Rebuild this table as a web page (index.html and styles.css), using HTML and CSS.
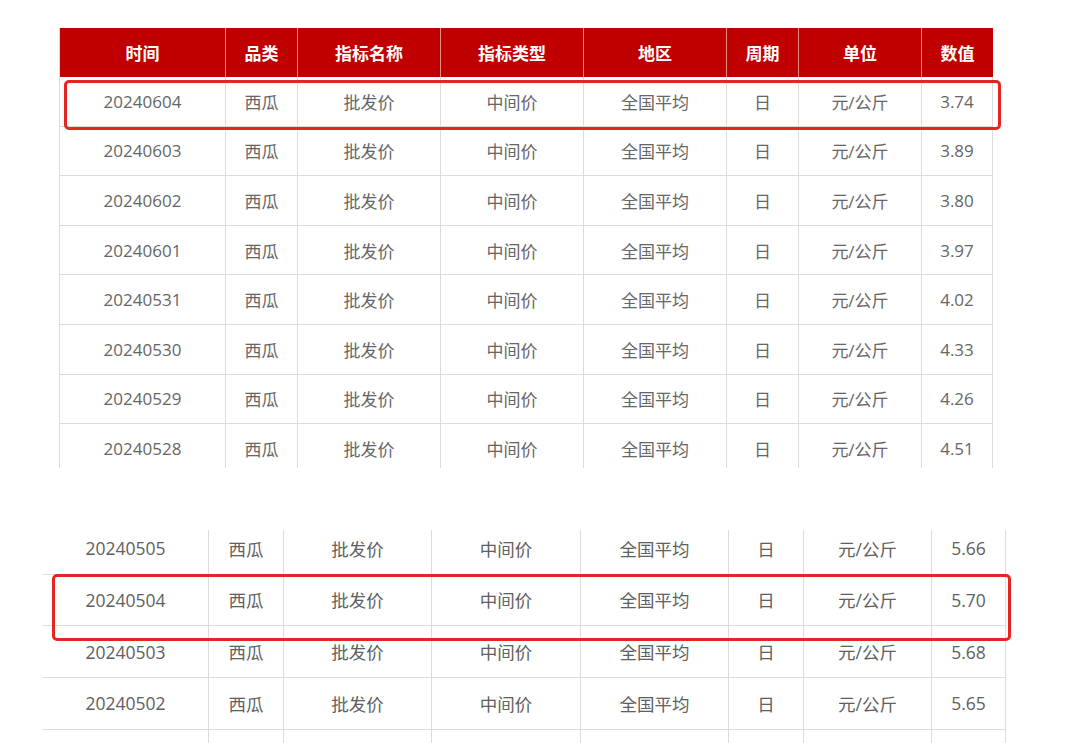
FILE: index.html
```html
<!DOCTYPE html>
<html lang="zh-CN">
<head>
<meta charset="utf-8">
<title>西瓜批发价</title>
<link rel="stylesheet" href="styles.css">
</head>
<body>
<main class="page">
  <section class="block block-top">
    <div class="clip clip-top">
      <div class="row row-top head">
        <div class="cell">时间</div><div class="cell">品类</div><div class="cell">指标名称</div><div class="cell">指标类型</div><div class="cell">地区</div><div class="cell">周期</div><div class="cell">单位</div><div class="cell">数值</div>
      </div>
      <div class="row row-top body-row">
        <div class="cell">20240604</div><div class="cell">西瓜</div><div class="cell">批发价</div><div class="cell">中间价</div><div class="cell">全国平均</div><div class="cell">日</div><div class="cell">元/公斤</div><div class="cell">3.74</div>
      </div>
      <div class="row row-top body-row">
        <div class="cell">20240603</div><div class="cell">西瓜</div><div class="cell">批发价</div><div class="cell">中间价</div><div class="cell">全国平均</div><div class="cell">日</div><div class="cell">元/公斤</div><div class="cell">3.89</div>
      </div>
      <div class="row row-top body-row">
        <div class="cell">20240602</div><div class="cell">西瓜</div><div class="cell">批发价</div><div class="cell">中间价</div><div class="cell">全国平均</div><div class="cell">日</div><div class="cell">元/公斤</div><div class="cell">3.80</div>
      </div>
      <div class="row row-top body-row">
        <div class="cell">20240601</div><div class="cell">西瓜</div><div class="cell">批发价</div><div class="cell">中间价</div><div class="cell">全国平均</div><div class="cell">日</div><div class="cell">元/公斤</div><div class="cell">3.97</div>
      </div>
      <div class="row row-top body-row">
        <div class="cell">20240531</div><div class="cell">西瓜</div><div class="cell">批发价</div><div class="cell">中间价</div><div class="cell">全国平均</div><div class="cell">日</div><div class="cell">元/公斤</div><div class="cell">4.02</div>
      </div>
      <div class="row row-top body-row">
        <div class="cell">20240530</div><div class="cell">西瓜</div><div class="cell">批发价</div><div class="cell">中间价</div><div class="cell">全国平均</div><div class="cell">日</div><div class="cell">元/公斤</div><div class="cell">4.33</div>
      </div>
      <div class="row row-top body-row">
        <div class="cell">20240529</div><div class="cell">西瓜</div><div class="cell">批发价</div><div class="cell">中间价</div><div class="cell">全国平均</div><div class="cell">日</div><div class="cell">元/公斤</div><div class="cell">4.26</div>
      </div>
      <div class="row row-top body-row">
        <div class="cell">20240528</div><div class="cell">西瓜</div><div class="cell">批发价</div><div class="cell">中间价</div><div class="cell">全国平均</div><div class="cell">日</div><div class="cell">元/公斤</div><div class="cell">4.51</div>
      </div>
    </div>
    <div class="mark mark-top"></div>
  </section>

  <section class="block block-bottom">
    <div class="clip clip-bottom">
      <div class="rows-bottom">
        <div class="row row-bottom">
          <div class="cell">20240505</div><div class="cell">西瓜</div><div class="cell">批发价</div><div class="cell">中间价</div><div class="cell">全国平均</div><div class="cell">日</div><div class="cell">元/公斤</div><div class="cell">5.66</div>
        </div>
        <div class="row row-bottom">
          <div class="cell">20240504</div><div class="cell">西瓜</div><div class="cell">批发价</div><div class="cell">中间价</div><div class="cell">全国平均</div><div class="cell">日</div><div class="cell">元/公斤</div><div class="cell">5.70</div>
        </div>
        <div class="row row-bottom">
          <div class="cell">20240503</div><div class="cell">西瓜</div><div class="cell">批发价</div><div class="cell">中间价</div><div class="cell">全国平均</div><div class="cell">日</div><div class="cell">元/公斤</div><div class="cell">5.68</div>
        </div>
        <div class="row row-bottom">
          <div class="cell">20240502</div><div class="cell">西瓜</div><div class="cell">批发价</div><div class="cell">中间价</div><div class="cell">全国平均</div><div class="cell">日</div><div class="cell">元/公斤</div><div class="cell">5.65</div>
        </div>
        <div class="row row-bottom">
          <div class="cell"></div><div class="cell"></div><div class="cell"></div><div class="cell"></div><div class="cell"></div><div class="cell"></div><div class="cell"></div><div class="cell"></div>
        </div>
      </div>
    </div>
    <div class="mark mark-bottom"></div>
  </section>
</main>
</body>
</html>
```

FILE: styles.css
```css
html, body {
  margin: 0;
  padding: 0;
  background: #ffffff;
}

body {
  font-family: "Open Sans", "Noto Sans CJK SC", sans-serif;
  color: #666666;
  width: 1080px;
  height: 743px;
  overflow: hidden;
}

.page {
  display: flex;
  flex-direction: column;
}

.block {
  position: relative;
}

.block-top {
  margin: 28px 0 0 59px;
  width: 934px;
}

.clip {
  overflow: hidden;
}

.clip-top {
  height: 440px;
  border-left: 1px solid #dcdcdc;
  box-sizing: border-box;
}

.row {
  display: grid;
  box-sizing: border-box;
}

.row-top {
  grid-template-columns: 166px 72px 143px 143px 143px 72px 123px 71px;
}

.cell {
  display: flex;
  align-items: center;
  justify-content: center;
  box-sizing: border-box;
  border-right: 1px solid #dcdcdc;
  border-bottom: 1px solid #dcdcdc;
  white-space: nowrap;
}

.head {
  height: 49px;
  background: #c00000;
}

.head .cell {
  color: #ffffff;
  font-weight: 700;
  font-size: 17px;
  border-right: 1px solid rgba(255, 255, 255, 0.55);
  border-bottom: none;
}

.head .cell:last-child {
  border-right: none;
}

.body-row {
  height: 49.6px;
}

.body-row .cell {
  font-size: 17px;
}

.block-bottom {
  margin: 62px 0 0 43px;
  width: 963px;
}

.clip-bottom {
  height: 213px;
}

.rows-bottom {
  margin-top: -7px;
}

.row-bottom {
  grid-template-columns: 166px 75px 148px 149px 148px 75px 128px 74px;
  height: 51.67px;
}

.row-bottom .cell {
  font-size: 17.5px;
  color: #606060;
}

.mark {
  position: absolute;
  box-sizing: border-box;
  border: 3px solid #e52620;
  border-radius: 5px;
  pointer-events: none;
}

.mark-top {
  left: 5px;
  top: 52px;
  width: 937px;
  height: 50px;
}

.mark-bottom {
  left: 9px;
  top: 44px;
  width: 959px;
  height: 67px;
}
```
